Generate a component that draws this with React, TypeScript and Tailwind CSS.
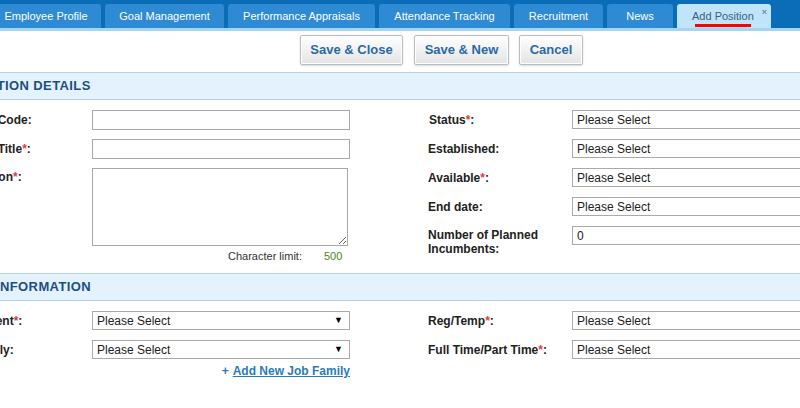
import React from 'react';

const tabs = [
  { label: 'Employee Profile', w: 'w-[110px]' },
  { label: 'Goal Management', w: 'w-[119px]' },
  { label: 'Performance Appraisals', w: 'w-[147px]' },
  { label: 'Attendance Tracking', w: 'w-[131px]' },
  { label: 'Recruitment', w: 'w-[89px]' },
  { label: 'News', w: 'w-[66px]' },
];

const Req = () => <span className="text-[#e8393a]">*</span>;

const Label: React.FC<{ children: React.ReactNode; className?: string }> = ({ children, className = '' }) => (
  <div className={`w-[144px] shrink-0 text-[12px] font-bold text-[#222] leading-[14px] ${className}`}>{children}</div>
);

const FakeSelect: React.FC<{ value?: string; className?: string }> = ({ value = 'Please Select', className = '' }) => (
  <div
    className={`h-full border border-[#a9a9a9] bg-white flex items-center justify-between pl-[4px] pr-[6px] text-[12px] text-[#222] ${className}`}
  >
    <span>{value}</span>
    <span className="text-[9px] text-black">▼</span>
  </div>
);

const SectionHeader: React.FC<{ title: string }> = ({ title }) => (
  <div className="h-[28px] border-y border-[#b6d2e6] bg-[#e3f2fc] flex items-center pl-[17px] text-[13px] font-bold text-[#1c4f80] tracking-[0.4px]">
    {title}
  </div>
);

const Button: React.FC<{ children: React.ReactNode; w: string }> = ({ children, w }) => (
  <button
    className={`${w} h-[30px] border border-[#bcbcbc] rounded-[2px] bg-gradient-to-b from-white to-[#e4e4e4] shadow-[inset_0_0_0_1px_#fff,0_1px_2px_rgba(0,0,0,0.15)] text-[13px] font-bold text-[#2a6aa3]`}
  >
    {children}
  </button>
);

export default function App() {
  return (
    <div className="w-[800px] h-[408px] overflow-hidden bg-white font-['Liberation_Sans',Arial,sans-serif]">
      {/* tab bar */}
      <div className="h-[28px] bg-[#0b6db7] flex items-end">
        <div className="flex items-end gap-[4px] -ml-[9px]">
          {tabs.map(t => (
            <div
              key={t.label}
              className={`${t.w} h-[24px] shrink-0 rounded-t-[3px] bg-[#2d8ad3] text-white text-[11px] flex items-center justify-center`}
            >
              {t.label}
            </div>
          ))}
          <div className="relative w-[94px] h-[24px] shrink-0 rounded-t-[3px] bg-[#c0e4f9] text-[#3d5f86] text-[11px] flex items-center pl-[15px]">
            Add Position
            <span className="absolute left-[18px] bottom-[1px] w-[56px] h-[3px] bg-[#ff0000]" />
            <span className="absolute right-[4px] top-[2px] text-[9px] font-bold text-[#6d8fb3]">×</span>
          </div>
        </div>
      </div>
      <div className="h-[3px] bg-[#a3d5f4]" />

      {/* actions */}
      <div className="flex pt-[4px] pl-[300px]">
        <Button w="w-[103px]">Save &amp; Close</Button>
        <div className="ml-[11px]">
          <Button w="w-[95px]">Save &amp; New</Button>
        </div>
        <div className="ml-[10px]">
          <Button w="w-[64px]">Cancel</Button>
        </div>
      </div>

      <div className="mt-[7px] -ml-[53px] w-[853px]">
        <SectionHeader title="POSITION DETAILS" />
        <div className="h-[173px] flex pt-[10px]">
          <div className="w-[481px] shrink-0 flex flex-col gap-[9px]">
            <div className="h-[20px] flex items-center">
              <Label className="w-[145px]">Position Code:</Label>
              <input className="w-[258px] h-[20px] border border-[#a8a8a8] outline-none" />
            </div>
            <div className="h-[20px] flex items-center">
              <Label className="w-[145px]">
                Position Title<Req />:
              </Label>
              <input className="w-[258px] h-[20px] border border-[#a8a8a8] outline-none" />
            </div>
            <div className="flex items-start">
              <Label className="w-[145px] pt-[2px]">
                Description<Req />:
              </Label>
              <textarea className="w-[256px] h-[78px] border border-[#a8a8a8] outline-none block" />
            </div>
            <div className="-mt-[6px] flex pl-[281px] text-[11px] leading-[14px]">
              <span className="w-[96px] text-[#333]">Character limit:</span>
              <span className="text-[#4f8419]">500</span>
            </div>
          </div>
          <div className="flex flex-col gap-[10px]">
            <div className="h-[19px] flex items-center">
              <Label className="pl-[1px]">
                Status<Req />:
              </Label>
              <FakeSelect className="w-[260px]" />
            </div>
            <div className="h-[19px] flex items-center">
              <Label>Established:</Label>
              <FakeSelect className="w-[260px]" />
            </div>
            <div className="h-[19px] flex items-center">
              <Label>
                Available<Req />:
              </Label>
              <FakeSelect className="w-[260px]" />
            </div>
            <div className="h-[19px] flex items-center">
              <Label>End date:</Label>
              <FakeSelect className="w-[260px]" />
            </div>
            <div className="flex items-start">
              <Label className="pt-[2px] leading-[13px]">
                Number of Planned
                <br />
                Incumbents:
              </Label>
              <div className="w-[260px] h-[19px] border border-[#a9a9a9] bg-white flex items-center pl-[4px] text-[12px] text-[#222]">
                0
              </div>
            </div>
          </div>
        </div>

        <SectionHeader title="JOB INFORMATION" />
        <div className="flex pt-[10px]">
          <div className="w-[481px] shrink-0 flex flex-col gap-[10px]">
            <div className="h-[19px] flex items-center">
              <Label className="w-[145px]">
                Department<Req />:
              </Label>
              <FakeSelect className="w-[258px]" />
            </div>
            <div className="h-[19px] flex items-center">
              <Label className="w-[145px]">Job Family:</Label>
              <FakeSelect className="w-[258px]" />
            </div>
            <div className="-mt-[5px] w-[403px] flex justify-end items-center text-[12px] font-bold leading-[14px] text-[#2b7bb9]">
              <span className="mr-[4px]">+</span>
              <a href="#" className="underline">
                Add New Job Family
              </a>
            </div>
          </div>
          <div className="flex flex-col gap-[10px]">
            <div className="h-[19px] flex items-center">
              <Label>
                Reg/Temp<Req />:
              </Label>
              <FakeSelect className="w-[260px]" />
            </div>
            <div className="h-[19px] flex items-center">
              <Label>
                Full Time/Part Time<Req />:
              </Label>
              <FakeSelect className="w-[260px]" />
            </div>
          </div>
        </div>
      </div>
    </div>
  );
}
